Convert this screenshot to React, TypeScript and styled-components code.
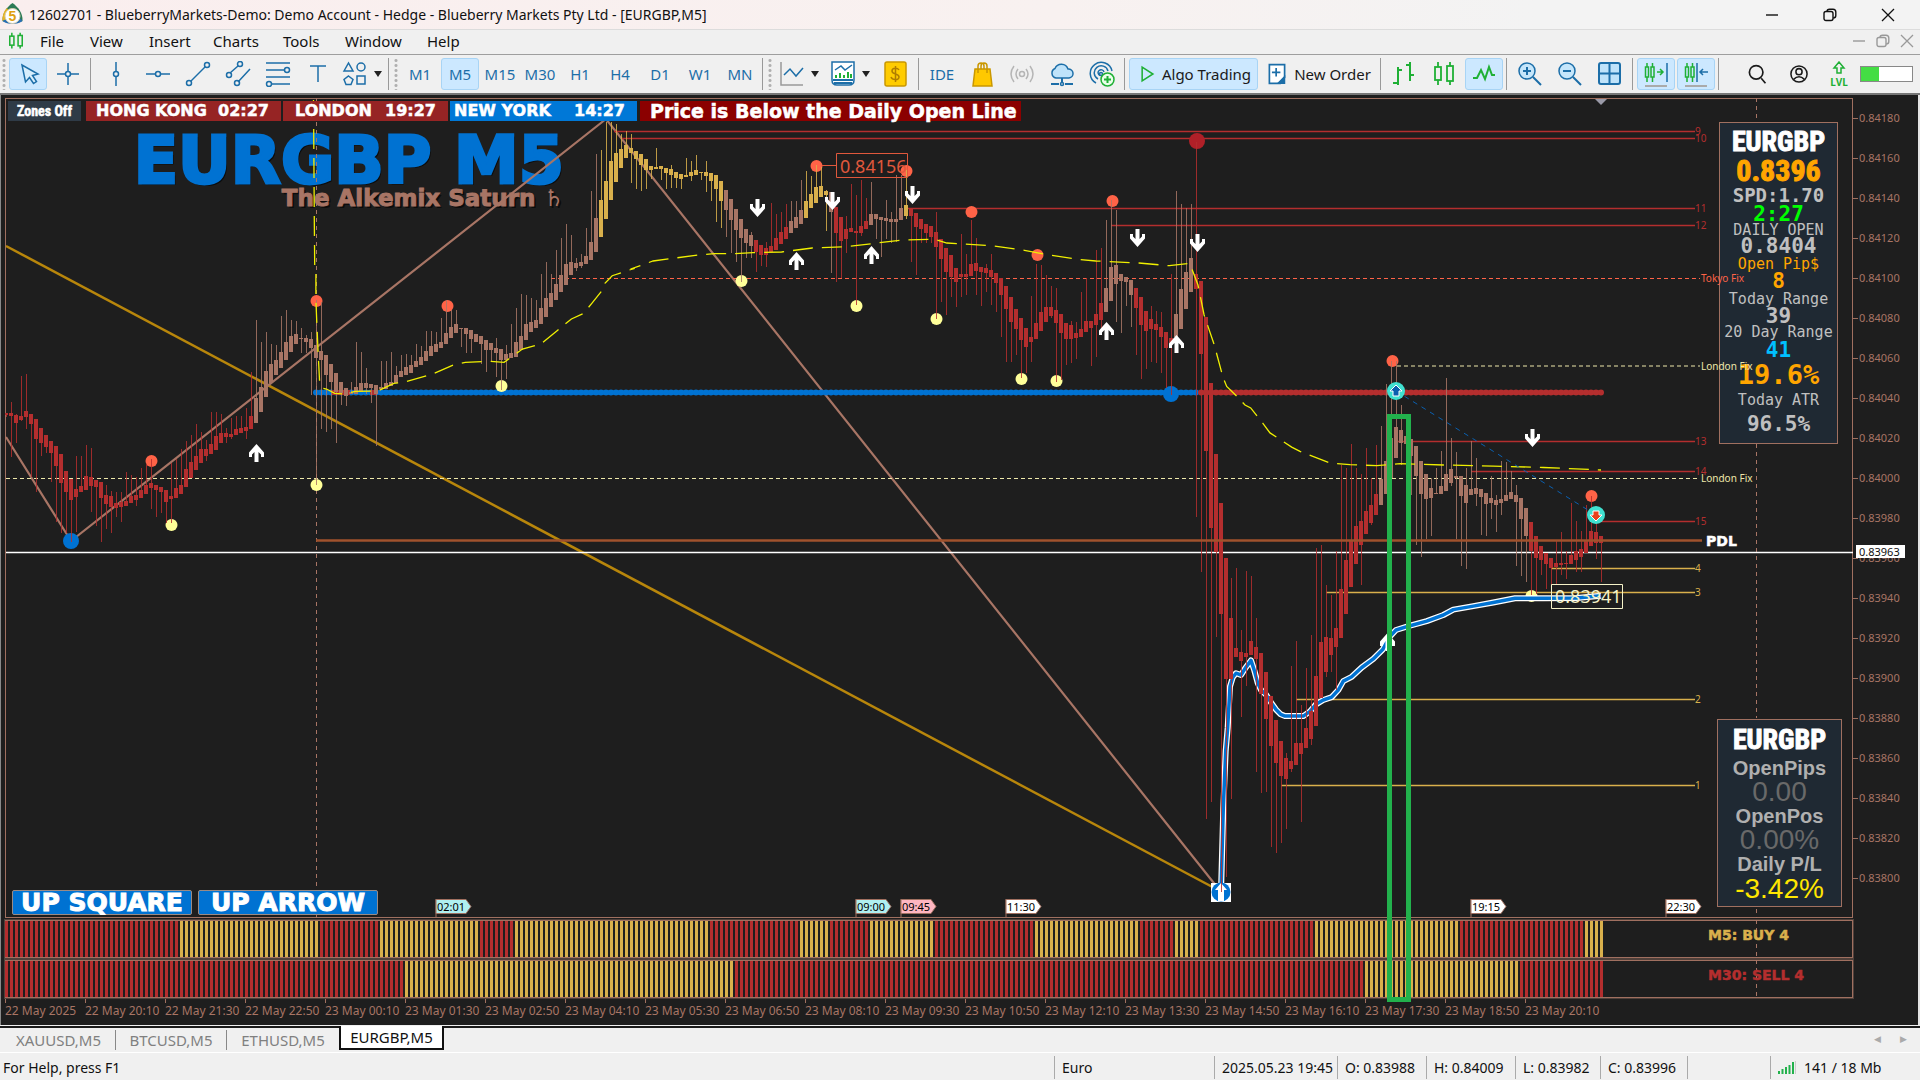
import React from 'react';
import styled, { createGlobalStyle } from 'styled-components';

const c = {
  chartBg: '#1e1e1e',
  frame: '#a07060',
  brown: '#a87565',
  red: '#b42e2e',
  gold: '#d9b04c',
  blue: '#0072d2',
  uiBlue: '#1c6ea8',
  uiGreen: '#1fb035',
  tomato: '#ff6347',
  bar: '#f0f0f0',
};

const heavy = `'Arial Black', 'DejaVu Sans', sans-serif`;
const narrow = `Impact, 'Liberation Sans Narrow', 'Roboto Condensed', 'DejaVu Sans Condensed', sans-serif`;
const ui = `'Segoe UI', 'Noto Sans', 'Open Sans', sans-serif`;
const mono = `Consolas, 'DejaVu Sans Mono', monospace`;
const axis = `Tahoma, 'Noto Sans', sans-serif`;

const GlobalStyle = createGlobalStyle`
  *, *::before, *::after { box-sizing: border-box; }
  body { margin: 0; background: #f0f0f0; }
  button, input { font: inherit; }
  button { padding: 0; border: 0; background: none; color: inherit; }
`;

const Window = styled.div`
  display: flex;
  flex-direction: column;
  min-height: 100vh;
  font-family: ${ui};
  color: #111;
  overflow: hidden;
`;

/* ---------- title and menu ---------- */

const TitleBar = styled.header`
  display: flex;
  align-items: center;
  height: 29px;
  padding: 0 3px 0 2px;
  gap: 6px;
  background: linear-gradient(90deg, #faeeee 0%, #f8f1f0 55%, #f3f3f3 80%);
  h1 {
    flex: 1;
    margin: 0;
    font-size: 14px;
    line-height: 28px;
    font-weight: 400;
    white-space: nowrap;
  }
`;

const WindowControls = styled.div<{ $small?: boolean }>`
  display: flex;
  color: ${(p) => (p.$small ? '#999' : '#111')};
  button {
    display: grid;
    place-items: center;
    width: ${(p) => (p.$small ? 24 : 58)}px;
    height: 24px;
  }
`;

const MenuBar = styled.nav`
  display: flex;
  align-items: center;
  height: 26px;
  padding: 0 1px 2px 7px;
  background: ${c.bar};
  border-top: 1px solid #dcdcdc;
  border-bottom: 1px solid #9e9e9e;
  font-size: 15px;
`;

const MenuItem = styled.button<{ $w: number }>`
  width: ${(p) => p.$w}px;
  padding-left: 15px;
  text-align: left;
  line-height: 22px;
`;

const Spacer = styled.div`
  flex: 1;
`;

/* ---------- toolbar ---------- */

const Toolbar = styled.div`
  display: flex;
  align-items: center;
  gap: 2px;
  height: 40px;
  padding: 2px 7px 2px 1px;
  background: ${c.bar};
  border-bottom: 2px solid #777;
  color: ${c.uiBlue};
  font-size: 15px;
`;

const Tool = styled.button<{ $w?: number; $on?: boolean; $dark?: boolean }>`
  display: flex;
  align-items: center;
  justify-content: center;
  gap: 6px;
  flex: none;
  width: ${(p) => p.$w ?? 38}px;
  height: 32px;
  border: 1px solid ${(p) => (p.$on ? '#a8d4f5' : 'transparent')};
  border-radius: 3px;
  background: ${(p) => (p.$on ? '#cce8ff' : 'transparent')};
  color: ${(p) => (p.$dark ? '#1a1a1a' : c.uiBlue)};
  white-space: nowrap;
`;

const Divider = styled.span`
  flex: none;
  width: 1px;
  height: 32px;
  margin: 0 2px 0 1px;
  background: #999;
`;

const Grip = styled.span`
  flex: none;
  width: 6px;
  height: 32px;
  background: radial-gradient(circle, #b0b0b0 1px, transparent 2px) 0 0 / 6px 5px;
`;

const Caret = styled.span`
  border: 4px solid transparent;
  border-top: 6px solid #222;
  border-bottom: 0;
`;

const Meter = styled.span`
  display: block;
  width: 53px;
  height: 16px;
  border: 1px solid #888;
  background: linear-gradient(90deg, #44dd44 35%, #fff 35%);
`;

const RightTools = styled.div`
  display: flex;
  align-items: center;
  gap: 4px;
`;

/* ---------- chart ---------- */

const Chart = styled.main`
  position: relative;
  display: grid;
  grid-template-columns: minmax(0, 1fr) 63px;
  grid-template-rows: minmax(0, 1fr) 38px 38px 25px;
  row-gap: 2px;
  flex: 1;
  padding: 3px 2px 0 5px;
  background: ${c.chartBg};
  border-left: 1px solid #8a8a8a;
  border-right: 2px solid #e4e4e4;
  color: ${c.brown};
  font-family: ${axis};
`;

const Plot = styled.section`
  position: relative;
  border: 1px solid ${c.frame};
  margin-left: -1px;
`;

const Drawing = styled.svg`
  position: absolute;
  inset: -1px;
  width: calc(100% + 2px);
  height: calc(100% + 2px);
  pointer-events: none;
  text {
    font-family: ${axis};
  }
`;

const PriceScale = styled.ol`
  margin: 0;
  padding: 0;
  list-style: none;
  font-size: 11px;
  line-height: 40px;
  position: relative;
  li {
    display: flex;
    align-items: center;
    gap: 1px;
    height: 40px;
  }
  li::before {
    content: '';
    width: 5px;
    height: 1px;
    background: ${c.frame};
  }
`;

const LastPrice = styled.output`
  position: absolute;
  top: 447px;
  left: 3px;
  width: 49px;
  height: 13px;
  padding-left: 3px;
  line-height: 13px;
  background: #fff;
  color: #111;
`;

const Histogram = styled.section`
  position: relative;
  margin-left: -1px;
  border: 1px solid ${c.frame};
  outline: 1px solid #50403a;
`;

const Signal = styled.strong<{ $color: string }>`
  position: absolute;
  right: 60px;
  top: 6px;
  width: 84px;
  font: 700 14px/16px ${heavy};
  -webkit-text-stroke: 0.5px currentColor;
  white-space: nowrap;
  color: ${(p) => p.$color};
`;

const TimeScale = styled.ol`
  grid-column: 1 / -1;
  display: flex;
  margin: -2px 0 0 -1px;
  padding: 0;
  list-style: none;
  font-size: 12px;
  line-height: 16px;
  li {
    flex: none;
    width: 80px;
    white-space: nowrap;
  }
  li::before {
    content: '';
    display: block;
    width: 1px;
    height: 5px;
    background: ${c.frame};
  }
`;

const Sessions = styled.div`
  position: absolute;
  top: 2px;
  left: 2px;
  display: flex;
  gap: 2px;
  color: #fff;
  font: 700 16px/20px ${heavy};
  -webkit-text-stroke: 0.5px currentColor;
`;

const Session = styled.div<{ $w: number; $pad: number; $bg: string }>`
  display: flex;
  justify-content: space-between;
  width: ${(p) => p.$w}px;
  padding: 0 12px 0 ${(p) => p.$pad}px;
  background: ${(p) => p.$bg};
  white-space: nowrap;
`;

const ZonesButton = styled.button`
  width: 73px;
  margin-right: 3px;
  background: #2f3b47;
  color: #fff;
  font: 700 14px/18px ${narrow};
`;

const Notice = styled.p`
  margin: 0 0 0 1px;
  padding: 0 4px 0 10px;
  background: #8b0000;
  font-size: 19px;
  white-space: nowrap;
`;

const Heading = styled.div`
  position: absolute;
  top: 36px;
  left: 124px;
  width: 434px;
  text-align: right;
  white-space: nowrap;
  text-shadow: 2px 2px 0 #0c0c0c;
  h2 {
    margin: 0;
    color: ${c.blue};
    font: 700 65px/52px ${heavy};
    -webkit-text-stroke: 3px currentColor;
  }
  p {
    margin: 0;
    font: 700 23px/22px ${heavy};
    -webkit-text-stroke: 1px currentColor;
  }
  span {
    font-weight: 400;
    -webkit-text-stroke: 0;
  }
`;

const Panel = styled.aside<{ $top: number; $right: number; $w: number }>`
  position: absolute;
  top: ${(p) => p.$top}px;
  right: ${(p) => p.$right}px;
  width: ${(p) => p.$w}px;
  padding: 4px 0;
  border: 1px solid ${c.frame};
  background: #1f2933;
  text-align: center;
`;

const Row = styled.div<{ $h: number; $size: number; $color?: string; $font?: string; $bold?: boolean }>`
  height: ${(p) => p.$h}px;
  line-height: ${(p) => p.$h}px;
  font-size: ${(p) => p.$size}px;
  font-family: ${(p) => p.$font ?? mono};
  font-weight: ${(p) => (p.$bold ? 700 : 400)};
  color: ${(p) => p.$color ?? '#c0c0c0'};
  white-space: nowrap;
`;

const Headline = styled(Row)`
  -webkit-text-stroke: 1px currentColor;
`;

const Signals = styled.div`
  position: absolute;
  left: 6px;
  bottom: 2px;
  display: flex;
  gap: 6px;
  button {
    width: 180px;
    height: 25px;
    border: 1px solid #9a8a84;
    border-radius: 2px;
    background: ${c.blue};
    color: #fff;
    font: 700 25px/22px ${heavy};
    -webkit-text-stroke: 1px currentColor;
  }
`;

const Highlight = styled.div`
  position: absolute;
  top: 319px;
  left: 1386px;
  width: 24px;
  bottom: 23px;
  border: 5px solid #22b14c;
`;

/* ---------- footer ---------- */

const Tabs = styled.div`
  display: flex;
  height: 27px;
  padding: 0 8px 0 2px;
  margin-top: 1px;
  border-top: 2px solid #1a1a1a;
  border-bottom: 1px solid #fff;
  background: ${c.bar};
  align-items: flex-start;
  font-size: 15px;
`;

const Tab = styled.button<{ $w: number; $on?: boolean; $bar?: boolean }>`
  width: ${(p) => p.$w}px;
  height: ${(p) => (p.$on ? 24 : 20)}px;
  margin-top: ${(p) => (p.$on ? -2 : 2)}px;
  border: ${(p) => (p.$on ? '2px solid #111' : '0')};
  border-top: 0;
  border-right: ${(p) => (p.$on ? '2px solid #111' : p.$bar ? '1px solid #888' : '0')};
  background: ${(p) => (p.$on ? '#fff' : 'transparent')};
  color: ${(p) => (p.$on ? '#111' : '#808080')};
`;

const TabArrows = styled.div`
  display: flex;
  gap: 8px;
  color: #aaa;
  font-size: 9px;
  line-height: 22px;
  button { width: 18px; }
`;

const StatusBar = styled.footer`
  display: grid;
  grid-template-columns: minmax(0, 1fr) 160px 123px 89px 89px 85px 87px 83px 150px;
  height: 27px;
  padding: 3px 0 1px;
  background: ${c.bar};
  font-size: 14px;
  line-height: 22px;
  white-space: nowrap;
`;

const Status = styled.span<{ $first?: boolean }>`
  display: flex;
  align-items: center;
  gap: 8px;
  padding-left: ${(p) => (p.$first ? 3 : 7)}px;
  border-left: ${(p) => (p.$first ? '0' : '1px solid #aaa')};
`;

/* ---------- icons ---------- */

type IconProps = { children: React.ReactNode; size?: number; color?: string };
const Icon = ({ children, size = 26, color = 'currentColor' }: IconProps) => (
  <svg width={size} height={size} viewBox="0 0 26 26" fill="none" stroke={color} strokeWidth="1.5" aria-hidden="true">
    {children}
  </svg>
);

const CandleIcon = ({ size = 26 }: { size?: number }) => (
  <Icon size={size} color={c.uiGreen}>
    <g strokeWidth={size < 26 ? 2.2 : 1.8}>
      <path d="M7 1v5M7 19v5M19 1v4M19 20v4" />
      <rect x="4" y="6" width="6" height="13" />
      <rect x="16" y="5" width="6" height="15" />
    </g>
  </Icon>
);

const Restore = () => (
  <svg width="14" height="14" viewBox="0 0 14 14" fill="none" stroke="currentColor" strokeWidth="1.4" aria-hidden="true">
    <rect x="1" y="3.5" width="9" height="9" rx="2" />
    <path d="M4 3.5C4 2 5 1.2 6.500 1.2h3.500A2.800 2.800 0 0 1 12.800 4v3.500c0 1.500-.8 2.500-2.600 2.500" />
  </svg>
);
const Minimize = () => (
  <svg width="14" height="14" viewBox="0 0 14 14" stroke="currentColor" strokeWidth="1.4" aria-hidden="true"><path d="M1 7h12" /></svg>
);
const Close = () => (
  <svg width="14" height="14" viewBox="0 0 14 14" stroke="currentColor" strokeWidth="1.3" aria-hidden="true"><path d="M1 1l12 12M13 1L1 13" /></svg>
);

const Controls = ({ small }: { small?: boolean }) => (
  <WindowControls $small={small}>
    <button aria-label="Minimize"><Minimize /></button>
    <button aria-label="Restore"><Restore /></button>
    <button aria-label="Close"><Close /></button>
  </WindowControls>
);

const AppLogo = () => (
  <svg width="21" height="23" viewBox="0 0 21 23" aria-hidden="true">
    <path d="M10.500 0C16 4 21 10 20.500 18c-5 3-15 3-20 0C0 10 5 4 10.500 0z" fill="#2c7a55" />
    <path d="M.5 18C0 13 2 8 5 5l5 9z" fill="#e6b422" />
    <path d="M.5 18c5 4 15 4 20 0L14 11z" fill="#2a6fb5" />
    <circle cx="10.500" cy="13" r="7.500" fill="#fff" stroke="#d9d0b0" />
    <text x="10.500" y="18" textAnchor="middle" fontSize="14" fontWeight="700" fontFamily="Liberation Sans" fill="#e0a010">5</text>
  </svg>
);

const frames = ['M1', 'M5', 'M15', 'M30', 'H1', 'H4', 'D1', 'W1', 'MN'];

const MainToolbar = () => (
  <Toolbar role="toolbar">
    <Grip />
    <Tool $on aria-label="Cursor"><Icon><path d="M7 4l3.500 17 4-4.500 4 6 3-2-4-6 5.500-1.500z" fill="#d8eefc" /></Icon></Tool>
    <Tool aria-label="Crosshair"><Icon><path d="M13 2v8M13 16v8M2 13h8M16 13h8" /><circle cx="13" cy="13" r="2.500" /></Icon></Tool>
    <Divider />
    <Tool $w={42} aria-label="Vertical line"><Icon><path d="M13 1v9M13 16v9" /><circle cx="13" cy="13" r="2.500" /></Icon></Tool>
    <Tool aria-label="Horizontal line"><Icon><path d="M1 13h9M16 13h9" /><circle cx="13" cy="13" r="2.500" /></Icon></Tool>
    <Tool aria-label="Trendline"><Icon><path d="M6 20L20 6" /><circle cx="4" cy="22" r="2.500" /><circle cx="22" cy="4" r="2.500" /></Icon></Tool>
    <Tool aria-label="Channel"><Icon><path d="M5 12l8-7M13 21L25 8" /><circle cx="4" cy="14" r="2.500" /><circle cx="15" cy="3" r="2.500" /><circle cx="12" cy="22" r="2.500" /></Icon></Tool>
    <Tool aria-label="Fibonacci"><Icon><path d="M1 2h24M1 9h18M1 16h24M7 23h18" /><circle cx="22" cy="9" r="2.500" /><circle cx="4" cy="23" r="2.500" /></Icon></Tool>
    <Tool aria-label="Text"><Icon><path d="M5 5h16M13 5v16" /></Icon></Tool>
    <Tool $w={46} aria-label="Shapes"><Icon><path d="M2 10l4.500-8L11 10z" /><circle cx="19" cy="6" r="4" /><path d="M6.500 15l4.500 3.500-2 5H4l-2-5z" /><rect x="15" y="15" width="8" height="8" /></Icon><Caret /></Tool>
    <Divider />
    <Grip />
    {frames.map((f) => <Tool key={f} $on={f === 'M5'}>{f}</Tool>)}
    <Divider />
    <Grip />
    <Tool $w={48} aria-label="Chart type"><Icon><path d="M2 1v23h22" stroke="#999" /><path d="M5 14l6-6 6 7 7-8" /></Icon><Caret /></Tool>
    <Tool $w={50} aria-label="Indicators"><Icon><path d="M2 1h22v18q0 5-5 5H7q-5 0-5-5z" fill="#fff" /><path d="M3 19h20M4 22h18" strokeWidth="2" /><path d="M5 9l6-4 4 4 7-5" /><path d="M6 17v-3M10 17v-5M14 17v-3M18 17v-6M21 17v-4" stroke={c.uiGreen} strokeWidth="2" /></Icon><Caret /></Tool>
    <Tool aria-label="Trade"><Icon color="#c99700"><rect x="2" y="1" width="21" height="24" rx="2" fill="#ffcc00" /><path d="M16 9c-1-2-7-3-7 1s7 2 7 6-7 3-8 0M12.500 5v16" stroke="#b07d00" /></Icon></Tool>
    <Divider />
    <Tool>IDE</Tool>
    <Tool aria-label="Market"><Icon color="#c99700"><path d="M6 8h15l2 17H4z" fill="#ffc800" /><path d="M9 12V5q0-3 3-3t3 3v3M12 8V5q0-3 3-3t3 3v7" /></Icon></Tool>
    <Tool aria-label="Signals"><Icon color="#b5b5b5"><circle cx="13" cy="13" r="2.500" /><path d="M9 8q-4 5 0 10M17 8q4 5 0 10M5 5q-6 8 0 16M21 5q6 8 0 16" /></Icon></Tool>
    <Tool aria-label="VPS"><Icon><path d="M7 17a5 5 0 0 1-1-9.500A7 7 0 0 1 19 8a4.500 4.500 0 0 1 1 9z" fill="#bfe3fa" /><path d="M13 17v5M2 23h8M16 23h8" strokeWidth="2" /><circle cx="13" cy="23" r="1.500" /></Icon></Tool>
    <Tool aria-label="Copy"><Icon><path d="M7 22A11 11 0 1 1 23 10M9 18a7 7 0 1 1 10-8M11 14.500a3 3 0 1 1 4-3.500" /><circle cx="12" cy="13" r="1.500" /><circle cx="18.500" cy="18.500" r="6.500" fill="#eaffea" stroke={c.uiGreen} /><path d="M18.500 15v7M15 18.500h7" stroke={c.uiGreen} strokeWidth="2" /></Icon></Tool>
    <Divider />
    <Tool $w={129} $on $dark><Icon size={20} color={c.uiGreen}><path d="M8 4v18l14-9z" strokeWidth="2" /></Icon>Algo Trading</Tool>
    <Tool $w={117} $dark><Icon size={22} color={c.uiBlue}><path d="M4 2h18v15l-5 7H4z" fill="#fff" strokeWidth="2" /><path d="M22 24v-8l-8 8z" fill={c.uiBlue} /><path d="M12 6v10M7 11h10" strokeWidth="2" /></Icon>New Order</Tool>
    <Divider />
    <Tool aria-label="Bars"><Icon color={c.uiGreen}><path d="M7 6v18M2 22h5M7 9h4M19 1v19M15 4h4M19 14h4" strokeWidth="2" /></Icon></Tool>
    <Tool aria-label="Candles"><CandleIcon /></Tool>
    <Tool $on aria-label="Line"><Icon color={c.uiGreen}><path d="M2 17h4l4-8 4 9 4-12 3 8h3" strokeWidth="2" /></Icon></Tool>
    <Divider />
    <Tool aria-label="Zoom in"><Icon><circle cx="10" cy="10" r="8" fill="#c5e6fb" /><path d="M16 16l8 8M10 6v8M6 10h8" strokeWidth="2" /></Icon></Tool>
    <Tool aria-label="Zoom out"><Icon><circle cx="10" cy="10" r="8" fill="#c5e6fb" /><path d="M16 16l8 8M6 10h8" strokeWidth="2" /></Icon></Tool>
    <Tool aria-label="Tile"><Icon><rect x="2" y="2" width="21" height="21" rx="2" fill="#bfe3fa" strokeWidth="2" /><path d="M12.500 2v21M2 12.500h21" strokeWidth="2" /></Icon></Tool>
    <Divider />
    <Tool $on aria-label="Shift end"><Icon><g stroke={c.uiGreen}><path d="M4 2v19M9.500 2v19M14 11h6M17 8l3 3-3 3" /><path d="M2.500 6h3v10h-3zM8 6h3v10H8z" fill="#cce8ff" /></g><path d="M24 2v19" /><path d="M2 25h22" stroke="#aaa" strokeWidth="2" /></Icon></Tool>
    <Tool $on aria-label="Auto scroll"><Icon><g stroke={c.uiGreen}><path d="M4 2v19M9.500 2v19" /><path d="M2.500 6h3v10h-3zM8 6h3v10H8z" fill="#cce8ff" /></g><path d="M14 2v19M17 11h8M20 8l-3 3 3 3" /><path d="M2 25h22" stroke="#aaa" strokeWidth="2" /></Icon></Tool>
    <Divider />
    <Spacer />
    <RightTools>
      <Tool $dark aria-label="Search"><Icon size={22}><circle cx="12" cy="11" r="8" strokeWidth="2" /><path d="M18 18l5 6" strokeWidth="2" /></Icon></Tool>
      <Tool $dark aria-label="Account"><Icon size={20}><circle cx="13" cy="13" r="10.500" strokeWidth="2" /><circle cx="13" cy="10" r="4" strokeWidth="2" /><path d="M6 20q7-7 14 0" strokeWidth="2" /></Icon></Tool>
      <Tool $w={34} aria-label="Level"><Icon color={c.uiGreen}><path d="M11 12V7H8l5-6 5 6h-3v5z" /><text x="13" y="25" textAnchor="middle" fontSize="10" fontFamily="Noto Sans" fill={c.uiGreen} stroke="none" fontWeight="700">LVL</text></Icon></Tool>
      <Meter />
    </RightTools>
  </Toolbar>
);

/* ---------- price series ---------- */

// Each bar is "high top bottom low", preceded by its colour when it changes.
type Bar = { x: number; h: number; t: number; b: number; l: number; color: string };

const series = [
  {
    start: 0, y: 220, unit: 3,
    data: `r 578 579 584 590|545 579 587 710|583 585 608 668|467 587 600 602|462 573 592 627|582 583 612 770|597 597 657 817|625 625 668 708|645 645 680 700|662 662 700 785|677 677 737 905|703 703 788 938|752 752 815 940|778 778 840 965|707 808 830 935|707 797 817 817|676 767 810 810|685 772 797 875|780 780 800 917|787 787 833 965|795 825 852 927|813 827 862 938|817 848 864 890|815 845 862 905|755 843 859 859|765 828 850 850|772 825 840 858|745 809 834 834|733 795 822 822|717 788 805 867|795 795 810 890|800 800 815 878|810 810 845 910|730 827 837 910|717 805 833 833|687 795 823 823|662 748 800 800|645 725 773 773|612 707 750 750|635 687 728 728|660 687 708 722|575 673 703 703|575 648 690 690|583 640 668 668|625 640 652 668|595 643 650 657|588 627 645 645|587 625 638 638|563 620 633 657|455 587 627 627|b 300 533 608 608|365 500 575 575|335 452 532 532|372 432 490 490|375 420 465 465|287 395 443 443|270 367 420 420|300 347 395 395|302 342 372 372|323 354 357 400|345 353 365 400|335 358 385 525|240 375 413 795|245 393 420 628|405 405 465 635|432 432 485 627|460 460 517 668|485 485 518 555|505 505 528 557|487 515 523 523|365 502 522 522|395 488 515 515|443 490 505 523|493 493 503 548|495 495 522 678|422 500 508 508|422 490 506 506|395 485 498 498|437 465 488 488|405 453 472 472|402 440 465 465|405 435 460 460|373 422 440 440|377 410 435 435|332 393 423 423|332 378 408 408|335 372 395 395|293 365 383 383|240 338 372 372|270 320 355 355|270 312 338 338|325 325 328 380|325 325 343 400|330 330 358 398|342 342 365 365|347 347 373 432|360 360 390 455|370 370 390 422|353 383 398 470|388 388 420 510|375 403 420 478|312 398 415 415|263 367 410 410|222 348 390 390|225 312 360 360|233 305 335 335|240 300 325 325|163 265 312 312|125 235 290 290|163 218 262 262|90 193 240 240|53 165 217 217|12 132 195 195|45 125 165 165|115 128 145 153|103 125 138 145|23 107 132 132|-86 65 120 120|-198 -5 95 95`,
  },
  {
    start: 119, y: 120, unit: 3,
    data: `g 90 240 350 350|5 183 297 297|5 122 240 240|12 98 185 185|43 87 143 143|33 75 115 115|43 83 98 188|92 92 117 207|103 103 135 213|117 117 150 207|137 137 150 178|83 140 147 147|138 138 147 180|143 143 158 207|135 148 165 205|155 155 174 205|162 162 177 207|113 165 170 170|122 156 168 183|105 150 165 165|155 155 158 180|123 155 167 215|160 160 183 243|165 165 207 305|183 183 243 325|b 210 210 270 350|237 237 300 398|267 267 330 425|297 297 353 485|328 328 368 415|335 345 377 415|r 360 360 395 455|375 375 405 438|365 385 405 440|250 377 395 395|283 353 390 390|275 335 372 372|252 320 357 357|b 243 303 338 338|243 292 323 323|180 270 312 312|g 153 243 293 293|167 222 265 265|135 200 248 248|140 197 230 230|210 213 225 333|b 215 215 277 458|r 262 262 338 485|290 290 363 475|287 327 358 398|192 325 335 335|225 332 338 555|180 318 338 348|233 302 328 328|b 185 282 315 315|282 282 298 357|290 290 300 410|240 293 303 357|275 298 305 370|165 297 305 367|165 263 300 300|g 150 255 287 298|r 267 267 287 425|278 278 320 465|297 297 327 368|313 313 340 368|317 317 350 370|275 335 380 598|357 357 417 545|383 383 455 585|405 405 470 530|443 443 487 560|342 462 472 530|403 462 470 525|300 432 468 468|353 430 453 525|440 440 455 557|433 445 460 515|402 450 470 555|458 458 490 575|475 475 525 650|497 497 567 725|530 530 605 725|567 567 627 705|595 595 660 775|625 625 680 760|527 650 665 725|432 608 657 657|435 575 633 633|465 560 607 607|497 560 587 595|503 570 610 785|583 583 640 780|608 608 657 735|602 615 657 728|605 640 655 717|515 628 650 650|475 603 637 637|603 603 623 737|390 583 615 710|383 550 600 625|b 300 503 575 575|240 440 542 542|270 435 493 605|462 462 482 638|470 470 487 558|480 480 525 620|r 503 503 563 705|530 530 615 777|572 572 633 747|557 598 627 725|572 613 630 728|575 620 650 758|635 635 683 805|462 655 670 825|b 213 583 650 650|253 507 627 627|265 455 567 567|252 413 515 515|r 65 462 507 1190`,
  },
  {
    start: 239, y: 340, unit: 2.8,
    data: `r -165 -165 40 650|-65 -65 310 1342|120 120 525 1293|320 320 593 832|457 457 767 1545|610 610 948 1503|667 778 948 1285|638 862 887 887|813 873 898 1055|648 877 887 970|660 843 882 882|778 860 893 1210|877 877 990 1268|930 930 1062 1265|997 997 1137 1420|1063 1063 1185 1437|1122 1122 1220 1407|1155 1170 1228 1370|912 1178 1200 1210|842 1128 1190 1190|1023 1128 1158 1350|918 1087 1143 1143|827 1040 1118 1135|583 940 1080 1080|573 845 1003 1003|687 832 930 943|715 833 883 930|590 807 860 980|350 697 833 833|358 617 767 767|292 563 692 692|358 522 627 627|375 507 575 687|302 478 543 543|385 463 513 517|295 432 490 490|b 240 388 463 463|122 338 430 430|58 275 385 385|60 243 330 330|183 253 287 350|270 270 290 428|277 277 325 435|298 298 380 575|338 338 430 607|375 375 445 558|387 413 443 550|358 427 432 432|310 408 430 430|107 375 422 422|275 362 400 410|313 380 385 558|380 380 438 632|358 407 457 640|283 417 433 433|330 415 430 465|417 417 440 547|428 428 460 550|380 442 457 500|435 448 462 537|338 445 455 490|342 435 452 452|367 425 445 445|405 435 453 632|443 443 500 662|470 470 550 677|r 510 510 590 715|548 548 610 710|578 578 615 658|595 595 627 697|610 610 637 690|563 625 635 685|538 625 630 658|590 624 627 670|455 603 627 627|507 590 617 650|535 585 607 650|463 563 595 595|437 535 578 578|490 538 567 613|548 548 568 677`,
  },
];

const tint: Record<string, string> = { r: c.red, b: c.brown, g: c.gold };

const bars: Bar[] = series.flatMap(({ start, y, unit, data }) => {
  let color = c.red;
  return data.split('|').map((row, i) => {
    const parts = row.split(' ');
    if (parts.length === 5) color = tint[parts.shift() as string];
    const [h, t, b, l] = parts.map((n) => Math.round(y + Number(n) / unit));
    return { x: 6 + 5 * (start + i), h, t, b, l, color };
  });
});

// Turns "x,y x,y" readings on a local grid into chart points.
const trace = (pts: string, ox: number, oy: number, sx: number, sy: number) =>
  pts.split(' ').map((p) => {
    const [x, y] = p.split(',').map(Number);
    return `${(ox + x / sx).toFixed(1)},${(oy + y / sy).toFixed(1)}`;
  }).join(' ');

const openAverage = [
  trace('768,-360 770,0 771,135 774,158 774,240 776,300 779,390 783,485 790,505 800,507 820,520 845,522 870,514 925,513 965,490 990,487 1060,462 1110,435 1140,427 1200,424 1235,427 1280,387 1325,372 1365,332 1400,297 1430,280 1450,250 1475,212 1482,190 1500,167 1555,145', 0, 220, 2.45, 3),
  trace('75,447 130,423 240,405 280,401 330,401 375,398 445,396 520,384 600,380 665,371 740,360 820,358 850,369 960,377 1040,391 1090,403 1170,418 1215,423 1320,429 1395,437 1445,430 1465,495 1480,585 1505,675 1525,765', 600, 120, 2.45, 3),
  trace('187,100 200,130 230,157 255,182 272,190 308,233 330,260 395,300 420,312 484,335 512,345 570,349 650,352 720,346 850,350 1000,353 1150,357 1323,364', 1160, 340, 3, 2.8),
].join(' ');

const slowAverage = trace('183,1547 190,1310 197,1150 203,1085 210,970 218,945 228,933 243,938 255,920 273,897 283,925 293,960 303,980 318,993 333,1015 348,1035 362,1048 375,1053 430,1053 450,1040 468,1020 490,1008 515,1000 535,980 550,955 575,943 605,917 640,893 668,867 690,830 708,812 750,800 800,787 850,770 880,755 940,745 1000,735 1065,723 1150,723 1250,722 1323,716', 1160, 340, 3, 2.8);

const levels: [string, number, number, string][] = [
  ['9', 614, 131, c.red], ['10', 622, 138, c.red], ['11', 906, 208, c.red], ['12', 1111, 225, c.red],
  ['13', 1396, 441, c.red], ['14', 1471, 471, c.red], ['15', 1600, 521, c.red],
  ['4', 1551, 568, c.gold], ['3', 1326, 592, c.gold], ['2', 1296, 699, c.gold], ['1', 1281, 785, c.gold],
];

const highs = [[316, 301], [447, 306], [151, 461], [816, 166], [906, 171], [971, 212], [1112, 201], [1037, 255], [1392, 361], [1591, 496]];
const lows = [[171, 525], [316, 485], [501, 386], [741, 281], [856, 306], [936, 319], [1021, 379], [1056, 381], [1531, 596]];
const downs = [[757, 208], [832, 201], [912, 195], [1137, 238], [1197, 243], [1532, 438]];
const ups = [[256, 453], [796, 261], [871, 255], [1106, 331], [1176, 344], [1387, 642]];
const flags: [string, number, string][] = [
  ['02:01', 436, '#b0f0f0'], ['09:00', 856, '#b0f0f0'], ['09:45', 901, '#ffb6c1'], ['11:30', 1006, '#fff'], ['19:15', 1471, '#fff'], ['22:30', 1666, '#fff'],
];

const Arrow = ({ x, y, up }: { x: number; y: number; up?: boolean }) => (
  <path transform={`translate(${x} ${y})${up ? ' scale(1 -1)' : ''}`} d="M-2-9h4V1L4.500-1.500V-4h3V0.500L0 9-7.500 0.500V-4h3v2.500L-2 1z" fill="#fff" />
);

const PriceDrawing = () => (
  <Drawing viewBox="5 98 1848 820" preserveAspectRatio="xMinYMin meet">
    <g stroke={c.brown} strokeDasharray="4 4">
      <path d="M316.500 98V919M1756.500 98V121M1756.500 444V718M1756.500 909V919" />
    </g>
    <path d="M6 246L1220 891" stroke="#b8860b" strokeWidth="2.500" />
    <path d="M6 437L71 541 606 119 1221 892" stroke={c.brown} strokeWidth="2.200" fill="none" />
    {levels.map(([n, x, y, color]) => (
      <g key={n}>
        <path d={`M${x} ${y + 0.5}H1695`} stroke={color} strokeWidth="1.300" />
        <text x="1695" y={y + 4} fontSize="10" fill={color}>{n}</text>
      </g>
    ))}
    <g strokeDasharray="4 3" strokeWidth="1.200">
      <path d="M551 278.500H1700" stroke={c.tomato} />
      <path d="M1397 366H1700M6 478.500H1698" stroke="#eee8aa" />
    </g>
    <g fontSize="10">
      <text x="1701" y="282" fill={c.tomato}>Tokyo Fix</text>
      <text x="1701" y="370" fill="#eee8aa">London Fix</text>
      <text x="1701" y="482" fill="#eee8aa">London Fix</text>
    </g>
    <path d="M316 392.500H1197" stroke={c.blue} strokeWidth="4" />
    <path d="M316 392.500H1197" stroke={c.blue} strokeWidth="6" strokeLinecap="round" strokeDasharray="0 5" />
    <path d="M332 392.500H350M370 392.500H377" stroke={c.red} strokeWidth="5" />
    <path d="M1201 392.500H1602" stroke={c.red} strokeWidth="4" />
    <path d="M1201 392.500H1602" stroke={c.red} strokeWidth="6" strokeLinecap="round" strokeDasharray="0 5" />
    <path d="M6 552.500H1853" stroke="#fff" strokeWidth="1.500" />
    <path d="M1601 105l-6-6h12z" fill="#9a9aa8" />
    {highs.map(([x, y]) => <circle key={x} cx={x + 0.5} cy={y} r="6" fill={c.tomato} />)}
    {lows.map(([x, y]) => <circle key={x} cx={x + 0.5} cy={y} r="6" fill="#ffff99" />)}
    <circle cx="71" cy="541" r="8" fill={c.blue} />
    <circle cx="1171" cy="394" r="8" fill={c.blue} />
    <circle cx="1197" cy="141" r="8" fill="#b02028" />
    <polyline points={slowAverage} fill="none" stroke="#fff" strokeWidth="6" strokeLinejoin="round" />
    <polyline points={slowAverage} fill="none" stroke={c.blue} strokeWidth="3.500" strokeLinejoin="round" />
    <rect x="1211" y="883" width="20" height="19" fill="#fff" />
    <circle cx="1221" cy="892" r="9.500" fill={c.blue} />
    <path d="M1221 883l6 7h-3v11h-6v-11h-3z" fill="#fff" />
    <g shapeRendering="crispEdges">
      {bars.map((b) => (
        <g key={b.x} fill={b.color}>
          <rect x={b.x} y={b.h} width="1" height={Math.max(1, b.l - b.h)} opacity=".85" />
          <rect x={b.x - 2} y={b.t} width="4" height={Math.max(1, b.b - b.t)} />
        </g>
      ))}
    </g>
    <polyline points={openAverage} fill="none" stroke="#f0f000" strokeWidth="1.300" strokeDasharray="20 9" />
    <path d="M316 540.500H1702" stroke="#a0522d" strokeWidth="2.500" />
    <text x="1706" y="546" fontSize="14" style={{ fontFamily: heavy }} fontWeight="700" fill="#fff" stroke="#fff" strokeWidth=".5">PDL</text>
    {downs.map(([x, y]) => <Arrow key={x} x={x + 0.5} y={y} />)}
    {ups.map(([x, y]) => <Arrow key={x} x={x + 0.5} y={y} up />)}
    <path d="M1396 391L1596 515" stroke="#0a5fae" strokeDasharray="5 5" />
    <circle cx="1396" cy="391" r="9" fill="#40e0d0" />
    <path d="M1396 385l6 6h-3v5h-6v-5h-3z" fill="#0a5fae" stroke="#fff" />
    <circle cx="1596" cy="515" r="9" fill="#40e0d0" />
    <path d="M1596 521l6-6h-3v-4h-6v4h-3z" fill="#e8401c" stroke="#fff" />
    <path d="M822 165.500H836M836.500 153.500h71v24h-71z" fill="none" stroke="#e0583c" />
    <text x="840" y="173" fontSize="18" fill="#e0583c">0.84156</text>
    <path d="M1551.500 584.500h71v24h-71z" fill="none" stroke="#f5f2c8" />
    <text x="1555" y="603" fontSize="18" fill="#f5f2c8">0.83941</text>
    {flags.map(([t, x, bg]) => (
      <g key={t}>
        <path d={`M${x} 899V919`} stroke={c.frame} />
        <path d={`M${x} 899.500h30l5 7-5 7h-30z`} fill={bg} stroke={c.frame} />
        <text x={x + 1} y="911" fontSize="11" fill="#000">{t}</text>
      </g>
    ))}
  </Drawing>
);

type Run = [number, string];
const HistogramDrawing = ({ runs }: { runs: Run[] }) => (
  <Drawing viewBox="5 0 1848 38" preserveAspectRatio="xMinYMin meet" shapeRendering="crispEdges">
    {bars.map(({ x }) => {
      const run = runs.find(([end]) => x < end) ?? runs[runs.length - 1];
      return <rect key={x} x={x - 1} y="1" width="3" height="36" fill={tint[run[1]]} />;
    })}
    <path d="M1756.500 0V38" stroke={c.brown} strokeDasharray="4 4" />
  </Drawing>
);

const fastRuns: Run[] = [[178, 'r'], [317, 'g'], [377, 'r'], [478, 'g'], [513, 'r'], [708, 'g'], [799, 'r'], [828, 'g'], [868, 'r'], [933, 'g'], [1033, 'r'], [1138, 'g'], [1173, 'r'], [1198, 'g'], [1314, 'r'], [1458, 'g'], [1584, 'r'], [1700, 'g']];
const slowRuns: Run[] = [[403, 'r'], [733, 'g'], [1363, 'r'], [1518, 'g'], [1700, 'r']];

const prices = Array.from({ length: 20 }, (_, i) => (0.8418 - i * 0.0002).toFixed(5));
const times = ['22 May 2025', '22 May 20:10', '22 May 21:30', '22 May 22:50', '23 May 00:10', '23 May 01:30', '23 May 02:50', '23 May 04:10', '23 May 05:30', '23 May 06:50', '23 May 08:10', '23 May 09:30', '23 May 10:50', '23 May 12:10', '23 May 13:30', '23 May 14:50', '23 May 16:10', '23 May 17:30', '23 May 18:50', '23 May 20:10'];

const arial = `'Liberation Sans', Arial, sans-serif`;

export default function App() {
  return (
    <Window>
      <GlobalStyle />
      <TitleBar>
        <AppLogo />
        <h1>12602701 - BlueberryMarkets-Demo: Demo Account - Hedge - Blueberry Markets Pty Ltd - [EURGBP,M5]</h1>
        <Controls />
      </TitleBar>
      <MenuBar>
        <CandleIcon size={18} />
        <MenuItem $w={50}>File</MenuItem>
        <MenuItem $w={59}>View</MenuItem>
        <MenuItem $w={64}>Insert</MenuItem>
        <MenuItem $w={70}>Charts</MenuItem>
        <MenuItem $w={62}>Tools</MenuItem>
        <MenuItem $w={82}>Window</MenuItem>
        <MenuItem $w={60}>Help</MenuItem>
        <Spacer />
        <Controls small />
      </MenuBar>
      <MainToolbar />
      <Chart>
        <Plot>
          <Heading>
            <h2>EURGBP M5</h2>
            <p>The Alkemix Saturn <span>♄</span></p>
          </Heading>
          <Panel $top={23} $right={14} $w={119}>
            <Headline $h={30} $size={28} $color="#fff" $font={narrow} $bold>EURGBP</Headline>
            <Headline $h={28} $size={30} $color="#ffa500" $font={narrow} $bold>0.8396</Headline>
            <Row $h={20} $size={19} $bold>SPD:1.70</Row>
            <Row $h={18} $size={21} $color="#00ff00" $bold>2:27</Row>
            <Row $h={14} $size={15}>DAILY OPEN</Row>
            <Row $h={18} $size={21} $bold>0.8404</Row>
            <Row $h={18} $size={15} $color="#ffa500">Open Pip$</Row>
            <Row $h={16} $size={21} $color="#ffa500" $bold>8</Row>
            <Row $h={20} $size={15}>Today Range</Row>
            <Row $h={14} $size={21} $bold>39</Row>
            <Row $h={18} $size={15}>20 Day Range</Row>
            <Row $h={18} $size={21} $color="#00bfff" $bold>41</Row>
            <Row $h={32} $size={27} $color="#ffa500" $bold>19.6%</Row>
            <Row $h={18} $size={15}>Today ATR</Row>
            <Row $h={30} $size={21} $bold>96.5%</Row>
          </Panel>
          <Panel $top={620} $right={10} $w={125}>
            <Headline $h={32} $size={28} $color="#fff" $font={narrow} $bold>EURGBP</Headline>
            <Row $h={24} $size={20} $color="#b0b0b0" $font={arial} $bold>OpenPips</Row>
            <Row $h={24} $size={28} $color="#696969" $font={arial}>0.00</Row>
            <Row $h={24} $size={20} $color="#b0b0b0" $font={arial} $bold>OpenPos</Row>
            <Row $h={24} $size={28} $color="#696969" $font={arial}>0.00%</Row>
            <Row $h={24} $size={20} $color="#b0b0b0" $font={arial} $bold>Daily P/L</Row>
            <Row $h={26} $size={28} $color="#ffe600" $font={arial}>-3.42%</Row>
          </Panel>
          <PriceDrawing />
          <Sessions>
            <ZonesButton>Zones Off</ZonesButton>
            <Session $w={195} $pad={10} $bg="#962424"><span>HONG KONG</span><time>02:27</time></Session>
            <Session $w={165} $pad={12} $bg="#962424"><span>LONDON</span><time>19:27</time></Session>
            <Session $w={187} $pad={4} $bg="#0078d7"><span>NEW YORK</span><time>14:27</time></Session>
            <Notice>Price is Below the Daily Open Line</Notice>
          </Sessions>
          <Signals>
            <button>UP SQUARE</button>
            <button>UP ARROW</button>
          </Signals>
        </Plot>
        <PriceScale>
          {prices.map((p) => <li key={p}>{p}</li>)}
          <LastPrice>0.83963</LastPrice>
        </PriceScale>
        <Histogram>
          <HistogramDrawing runs={fastRuns} />
          <Signal $color={c.gold}>M5: BUY 4</Signal>
        </Histogram>
        <div />
        <Histogram>
          <HistogramDrawing runs={slowRuns} />
          <Signal $color={c.red}>M30: SELL 4</Signal>
        </Histogram>
        <div />
        <TimeScale>{times.map((t) => <li key={t}>{t}</li>)}</TimeScale>
        <Highlight />
      </Chart>
      <Tabs role="tablist">
        <Tab role="tab" $w={114} $bar>XAUUSD,M5</Tab>
        <Tab role="tab" $w={111} $bar>BTCUSD,M5</Tab>
        <Tab role="tab" $w={112}>ETHUSD,M5</Tab>
        <Tab role="tab" $w={105} $on>EURGBP,M5</Tab>
        <Spacer />
        <TabArrows>
          <button aria-label="Previous">◀</button>
          <button aria-label="Next">▶</button>
        </TabArrows>
      </Tabs>
      <StatusBar>
        <Status $first>For Help, press F1</Status>
        <Status>Euro</Status>
        <Status>2025.05.23 19:45</Status>
        <Status>O: 0.83988</Status>
        <Status>H: 0.84009</Status>
        <Status>L: 0.83982</Status>
        <Status>C: 0.83996</Status>
        <Status />
        <Status>
          <svg width="18" height="13" viewBox="0 0 18 13" fill="#22b14c" aria-hidden="true">
            <path d="M0 10h2v3H0zM3.500 8h2v5h-2zM7 6h2v7H7zM10.500 4h2v9h-2zM14 1h2v12h-2z" />
            <path d="M17 0h1v13h-1z" fill="#ccc" />
          </svg>
          141 / 18 Mb
        </Status>
      </StatusBar>
    </Window>
  );
}
